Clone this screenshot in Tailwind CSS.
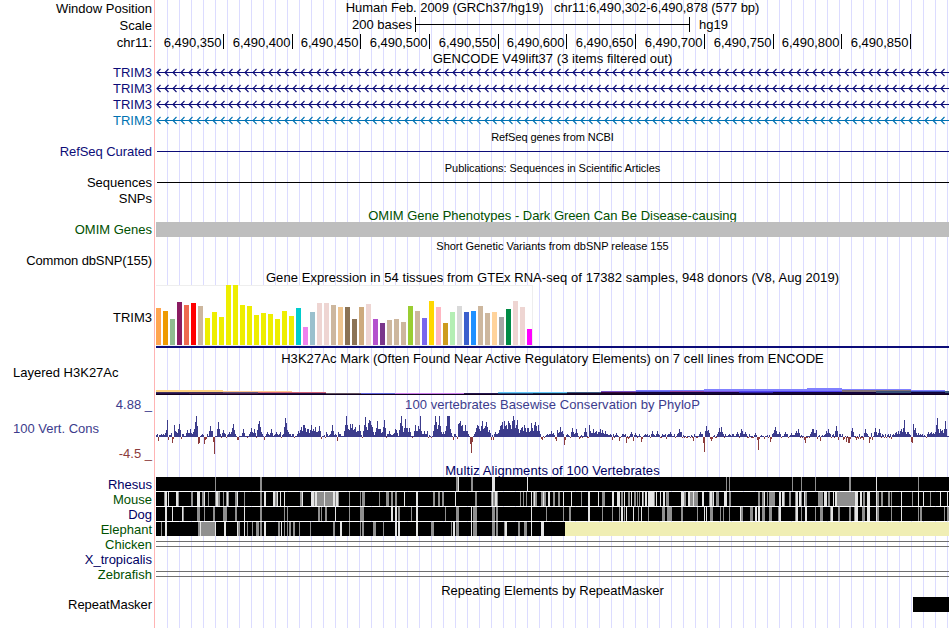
<!DOCTYPE html>
<html lang="en">
<head>
    <meta charset="UTF-8">
    <meta name="viewport" content="width=device-width, initial-scale=1.0">
    <script src="https://cdn.jsdelivr.net/npm/@tailwindcss/browser@4"></script>
    <title>Human chr11:6,490,302-6,490,878</title>
</head>
<body class="bg-white overflow-hidden">
  <div class="flex w-[949px] h-[628px] overflow-hidden font-['Liberation_Sans',Arial,sans-serif] text-[13px] text-black whitespace-nowrap">

    <!-- track labels -->
    <div class="flex flex-col shrink-0 w-[155px] pr-[2px] border-r border-[#ffb4b4] text-right">
      <div class="h-[17px] leading-[17px]">Window Position</div>
      <div class="h-[17px] leading-[17px]">Scale</div>
      <div class="h-[31px] leading-[17px]">chr11:</div>
      <div class="h-4 leading-[15px] text-[#0c0c78]">TRIM3</div>
      <div class="h-4 leading-[15px] text-[#0c0c78]">TRIM3</div>
      <div class="h-4 leading-[15px] text-[#0c0c78]">TRIM3</div>
      <div class="h-[31px] leading-[15px] text-[#0072b2]">TRIM3</div>
      <div class="h-[31px] leading-[15px] tracking-[-0.07px] text-[#0c0c78]">RefSeq Curated</div>
      <div class="h-4 leading-[15px]">Sequences</div>
      <div class="h-[31px] leading-[15px]">SNPs</div>
      <div class="h-[31px] leading-[15px] text-[#005000]">OMIM Genes</div>
      <div class="h-[32px] leading-[15px] tracking-[-0.12px]">Common dbSNP(155)</div>
      <div class="h-[80px] leading-[66px]">TRIM3</div>
      <div class="h-[32px] leading-[15px] text-left pl-[13px]">Layered H3K27Ac</div>
      <div class="h-[24px] leading-[15px] text-[#3c3c8c]">4.88 _</div>
      <div class="h-[25px] leading-[15px] text-left pl-[13px] text-[#3c3c8c]">100 Vert. Cons</div>
      <div class="h-[31px] leading-[15px] text-[#8c3c3c]">-4.5 _</div>
      <div class="h-[15px] leading-[15px] text-[#000064]">Rhesus</div>
      <div class="h-[15px] leading-[15px] text-[#005000]">Mouse</div>
      <div class="h-[15px] leading-[15px] text-[#000064]">Dog</div>
      <div class="h-[15px] leading-[15px] text-[#005000]">Elephant</div>
      <div class="h-[15px] leading-[15px] text-[#005000]">Chicken</div>
      <div class="h-[15px] leading-[15px] text-[#000064]">X_tropicalis</div>
      <div class="h-[30px] leading-[15px] text-[#005000]">Zebrafish</div>
      <div class="h-[15px] leading-[15px] tracking-[-0.05px]">RepeatMasker</div>
    </div>

    <!-- tracks -->
    <div class="flex flex-col shrink-0 ml-px w-[793px] text-center bg-[repeating-linear-gradient(90deg,transparent_0px,transparent_11px,#dcdcff_11px,#dcdcff_12px)]">
      <div class="h-[17px] leading-[15px] tracking-[-0.06px]">Human Feb. 2009 (GRCh37/hg19)&nbsp;&nbsp; chr11:6,490,302-6,490,878 (577 bp)</div>
      <div class="h-[17px] flex">
        <div class="w-[256px] text-right leading-[15px]">200 bases</div>
        <div class="ml-[3px] w-[275px] h-[15px] border-x border-black pt-[7px]"><div class="h-px bg-black"></div></div>
        <div class="ml-[9px] leading-[15px]">hg19</div>
      </div>
      <div id="ruler" class="h-[17px] flex leading-[17px] text-right"></div>
      <div class="h-[14px] leading-[15px] tracking-[0.03px]">GENCODE V49lift37 (3 items filtered out)</div>
      <svg id="genes" class="block h-[64px] w-[793px] fill-none" viewBox="0 0 793 64"></svg>
      <div class="h-[22px] leading-[16px] text-[11px] tracking-[-0.07px]">RefSeq genes from NCBI</div>
      <div class="h-px ml-px bg-[#0c0c78]"></div>
      <div class="h-[30px] pt-[8px] leading-[16px] text-[11px] tracking-[-0.05px]">Publications: Sequences in Scientific Articles</div>
      <div class="h-px ml-px bg-black"></div>
      <div class="h-[39px] pt-[25px] leading-[15px] text-[#005000]">OMIM Gene Phenotypes - Dark Green Can Be Disease-causing</div>
      <div class="h-[15px] bg-[#bebebe]"></div>
      <div class="h-[32px] pt-px leading-[16px] text-[11px] tracking-[-0.02px]">Short Genetic Variants from dbSNP release 155</div>
      <div class="h-[16px] leading-[17px] tracking-[0.065px]">Gene Expression in 54 tissues from GTEx RNA-seq of 17382 samples, 948 donors (V8, Aug 2019)</div>
      <div class="h-[61px] w-[377px] bg-white border-t border-r border-b border-[#eeeeee]">
        <svg id="gtex" class="block -mt-px w-[376px] h-[60px]" viewBox="0 0 376 60" shape-rendering="crispEdges"></svg>
      </div>
      <div class="h-[2px] bg-[#0c0c78]"></div>
      <div class="h-[17px] pt-px leading-[19px] tracking-[0.06px]">H3K27Ac Mark (Often Found Near Active Regulatory Elements) on 7 cell lines from ENCODE</div>
      <svg id="h3k" class="block w-[793px] h-[30px]" viewBox="0 365 793 30" shape-rendering="crispEdges"></svg>
      <div class="h-[17px] pt-[2px] leading-[15px] tracking-[0.06px] text-[#3c3c8c]">100 vertebrates Basewise Conservation by PhyloP</div>
      <svg id="phylop" class="block w-[793px] h-[50px]" viewBox="0 412 793 50" shape-rendering="crispEdges"></svg>
      <div class="h-[15px] leading-[17px] tracking-[0.1px] text-[#000064]">Multiz Alignments of 100 Vertebrates</div>
      <svg id="multiz" class="block w-[793px] h-[60px]" viewBox="156 0 793 60" shape-rendering="crispEdges"></svg>
      <div class="mt-[4px] h-[6px] border-y border-[#707070]"></div>
      <div class="mt-[24px] h-[6px] border-y border-[#707070]"></div>
      <div class="h-[20px] pt-[6px] leading-[15px]">Repeating Elements by RepeatMasker</div>
      <div class="self-end w-[36px] h-[15px] bg-black"></div>
    </div>
  </div>

  <script>
    var NS = 'http://www.w3.org/2000/svg';
    function rect(svg, x, y, w, h, color) {
      var r = document.createElementNS(NS, 'rect');
      r.setAttribute('x', x);
      r.setAttribute('y', y);
      r.setAttribute('width', w);
      r.setAttribute('height', h);
      r.setAttribute('fill', color);
      svg.appendChild(r);
    }
    function get(id) { return document.getElementById(id); }

    // ruler: position of each 50 base tick
    var prev = 156;
    [223, 292, 360, 429, 498, 566, 635, 704, 773, 841, 910].forEach(function (x, i) {
      var d = document.createElement('div');
      d.className = 'h-[15px] shrink-0 border-r border-black pr-[1.5px]';
      d.style.width = (x + 1 - prev) + 'px';
      d.textContent = '6,490,' + (350 + i * 50);
      get('ruler').appendChild(d);
      prev = x + 1;
    });

    // gene introns with strand arrows
    ['#0c0c78', '#0c0c78', '#0c0c78', '#0072b2'].forEach(function (color, i) {
      var y = i * 16 + 7.5;
      rect(get('genes'), 1, y - 0.5, 792, 1, color);
      var d = '';
      for (var x = 1; x < 790; x += 8) {
        d += 'M' + (x + 3.5) + ' ' + (y - 3.5) + 'L' + x + ' ' + y + 'L' + (x + 3.5) + ' ' + (y + 3.5);
      }
      var p = document.createElementNS(NS, 'path');
      p.setAttribute('d', d);
      p.setAttribute('stroke', color);
      p.setAttribute('stroke-width', '1.1');
      get('genes').appendChild(p);
    });

    // GTEx tissues: height, color
    var tissues = [
      [37, '#ffa54f'], [34, '#ee9a00'], [26, '#8fbc8f'], [43, '#8b1c62'], [40, '#ee6a50'], [42, '#ff0000'], [39, '#cdb79e'],
      [27, '#eeee00'], [33, '#eeee00'], [28, '#eeee00'], [60, '#eeee00'], [60, '#eeee00'], [40, '#eeee00'], [39, '#eeee00'],
      [30, '#eeee00'], [32, '#eeee00'], [31, '#eeee00'], [26, '#eeee00'], [34, '#eeee00'], [29, '#eeee00'], [37, '#00cdcd'],
      [18, '#ee82ee'], [33, '#9ac0cd'], [42, '#eed5d2'], [42, '#eed5d2'], [40, '#cdb79e'], [38, '#eec591'], [38, '#8b7355'],
      [26, '#8b7355'], [38, '#cdaa7d'], [41, '#eed5d2'], [26, '#b452cd'], [22, '#7a378b'], [25, '#cdb79e'], [26, '#cdb79e'],
      [23, '#cdb79e'], [39, '#9acd32'], [34, '#cdb79e'], [27, '#7a67ee'], [44, '#ffd700'], [38, '#ffb6c1'], [22, '#cd9b1d'],
      [33, '#b4eeb4'], [39, '#d9d9d9'], [33, '#3a5fcd'], [34, '#1e90ff'], [39, '#cdb79e'], [32, '#cdb79e'], [33, '#ffd39b'],
      [28, '#a6a6a6'], [36, '#008b45'], [44, '#eed5d2'], [38, '#eed5d2'], [16, '#ff00ff']
    ];
    tissues.forEach(function (t, i) {
      rect(get('gtex'), i * 7, 60 - t[0], 5, t[0], t[1]);
    });

    // H3K27Ac: x1, x2, y, height, color
    [
      [156, 949, 394, 1, '#10001c'], [156, 326, 393, 1, '#28104c'], [189, 258, 393, 1, '#50204c'],
      [156, 223, 390, 2, '#ffd280'], [223, 292, 391, 1, '#ffc890'], [156, 223, 392, 1, '#40305c'], [223, 258, 392, 1, '#5c5080'],
      [258, 326, 392, 1, '#d06478'], [326, 361, 393, 1, '#605060'], [361, 395, 393, 1, '#6464dc'], [395, 464, 393, 1, '#c878e8'],
      [464, 498, 393, 1, '#281850'], [498, 567, 392, 1, '#64c8fa'], [498, 533, 393, 1, '#28507c'], [533, 567, 393, 1, '#183048'],
      [567, 601, 392, 1, '#3c5a80'], [567, 636, 393, 1, '#180428'], [601, 636, 391, 1, '#7850c8'], [601, 636, 392, 1, '#400c3c'],
      [636, 949, 392, 2, '#14043c'], [636, 704, 390, 1, '#7878ff'], [636, 670, 391, 1, '#5858d8'], [670, 704, 391, 1, '#9040a0'],
      [704, 807, 389, 2, '#8080ff'], [704, 739, 391, 1, '#7850dc'], [739, 842, 391, 1, '#5040f0'], [739, 773, 392, 1, '#2c20a0'],
      [807, 842, 388, 3, '#8080ff'], [842, 911, 389, 1, '#8080ff'], [842, 911, 390, 2, '#807078'], [876, 911, 391, 2, '#385078'],
      [911, 945, 390, 1, '#8080ff'], [911, 945, 391, 1, '#384cb0'], [945, 949, 391, 2, '#385878']
    ].forEach(function (s) {
      rect(get('h3k'), s[0] - 156, s[2], s[1] - s[0], s[3], s[4]);
    });

    // PhyloP peaks and dips, each list in thirds of a pixel from its own origin
    var peaks = [
      [150, '21:3 34:3 40:3 50:7 52:17 64:4 74:12 80:5 84:8 88:13 112:7 122:8 130:5 136:15 139:21 158:3 181:11 186:6 206:15 220:7 238:5 248:9 250:13 279:8 300:5 304:9 314:8 324:13 328:16 332:10 352:5 365:8 380:5 392:5 406:19 410:14 416:5 445:6 450:7 455:10 459:12 463:12 467:9 472:8 476:8 480:7 485:12 489:8 493:6 497:10 503:5 508:11 530:5 547:12 565:5 585:12 588:21 592:12 596:8 600:13 604:9 607:13 612:8 617:10 621:6 627:12 642:12 645:20 650:10 654:14 657:17 662:16 665:12 668:10 680:9 683:16 687:8 690:8 700:10 703:17 717:6 735:8 740:7 750:14 754:21 763:9 767:18 771:9 778:9 795:12 806:11'],
      [415, '0:12 13:8 16:21 20:6 28:6 38:6 57:12 60:21 64:15 70:12 74:21 78:5 86:5 91:6 94:11 97:21 100:21 103:21 106:8 131:13 134:14 137:16 140:11 143:12 152:12 158:6 183:9 186:12 190:11 194:8 199:11 203:16 207:9 211:11 215:15 218:10 222:7 240:5 253:7 257:11 260:12 263:15 267:16 271:11 275:12 279:16 283:14 287:12 291:16 295:21 299:17 303:12 307:17 311:8 315:7 319:9 323:10 327:12 331:9 336:9 340:9 345:6 349:14 353:9 357:12 361:15 365:11 369:12 372:6 397:3 402:3 410:6 416:4 427:7 432:5 437:10 443:6 457:3 472:9 476:5 485:8 510:9 522:12 530:4 535:8 540:5 545:6 549:5 553:5 557:8 561:7 565:4 570:6 605:4 630:3 650:5 662:4 690:3 712:6 727:6 765:5 792:8 796:5 800:5'],
      [680, '60:5 80:11 84:7 119:9 123:10 127:5 147:3 172:5 183:8 187:6 195:5 225:4 282:7 286:10 290:6 297:5 316:5 333:4 345:4 350:6 355:8 393:5 397:8 401:8 408:7 435:3 440:6 445:8 470:11 513:6 516:9 557:8 575:4 585:9 598:8 640:3 645:4 650:5 655:6 661:6 665:8 669:9 673:17 677:5 681:5 685:5 689:3 701:13 705:9 710:4 715:4 720:3 745:5 750:4 755:5 760:4 765:5 768:12 772:19 776:8 780:8 784:6 787:7 793:8 796:16']
    ];
    var dips = [
      [150, '26:4 55:3 67:6 71:2 94:2 145:7 149:6 164:7 167:3 170:2 190:5 193:17 228:1 262:3 266:3 344:3 395:1 434:1 515:2 525:1 562:4 637:1'],
      [415, '40:1 49:1 115:3 126:2 165:7 169:16 172:5 230:3 234:3 379:2 382:3 388:1 420:2 424:4 448:8 451:3 465:1 494:2 520:1 592:3 614:4 617:1 634:6 640:2 655:4 679:5 683:2 705:1 735:1 755:2 780:1'],
      [680, '8:1 18:1 30:1 40:4 70:6 73:15 91:2 94:4 97:2 105:1 205:1 220:1 232:3 235:13 238:2 252:2 265:1 272:5 275:2 305:1 325:1 373:3 376:6 412:2 421:4 455:1 475:3 490:3 494:2 500:5 504:6 508:6 512:2 530:3 535:2 541:2 550:3 568:6 572:2 577:3 612:1 620:1 635:2 694:5 697:6 738:1']
    ];
    function spread(groups) {
      var out = {};
      groups.forEach(function (g) {
        g[1].split(' ').forEach(function (s) {
          var v = s.split(':');
          var x = Math.floor(g[0] + v[0] / 3) - 156;
          out[x] = Math.max(out[x] || 0, +v[1]);
        });
      });
      return out;
    }
    var up = spread(peaks), down = spread(dips);
    for (var x = 0; x < 793; x++) {
      if (down[x]) {
        rect(get('phylop'), x, 437, 1, down[x], '#8c3c3c');
        continue;
      }
      var near = Math.max(up[x - 1] || 0, up[x + 1] || 0);
      var low = (x * 7 + (x * x) % 11) % 5;
      var h = up[x] || (near ? Math.max(2, Math.round(near * 0.5)) : [2, 0, 3, 1, 1][low]);
      if (h) rect(get('phylop'), x, 437 - h, 1, h, '#3c3c8c');
      else rect(get('phylop'), x, 437, 1, 1, '#8c3c3c');
      rect(get('phylop'), x, 436, 1, 1, '#3c3c8c');
    }

    // alignment gaps: position, shade (g gray, w light), width
    [
      '215g1 260g2 456g2 458w1 471g2 492w3 527w1 726g1 729g1 792g1 801g1 815g1 849g2 876w1 918g1',
      '164g1 165w2 168w1 176w2 178g1 191g2 197w3 202g2 204w1 208g1 215g1 216w2 218g2 223g1 226g1 227w1 228g1 235g2 237w1 244g1 260g2 264w2 273w2 275g2 277w1 280w1 284w1 300g2 302w1 311w3 314g1 315w2 317g16 324w1 333w2 335g1 336w2 338g1 349g1 360g1 362g3 379g1 386g3 391g2 395g2 404w1 416w2 433g2 438g2 442g2 455w1 475g2 491g1 492w1 493g2 495w2 497g1 520g1 523g1 526g1 531w1 533g1 534w1 535g2 541g2 543w1 544g2 548w2 553g2 558g2 563w1 571w1 581g1 588w2 598w1 602g3 612w2 617w3 621g2 624w1 628g2 631w1 634g2 637g1 639g1 642w1 643g1 645w2 648w6 654g1 656w1 660w1 663w2 666g3 681w3 684g2 688w2 690g3 693w1 694g4 702w2 709g1 710w2 712g1 713w1 716g3 724w3 729g2 758g2 762g2 764w1 767g1 769g6 779w2 782w2 784g1 789g2 795g1 796w2 799w2 801g1 804w1 805g2 818g5 824w3 828g2 833w1 835w2 837g18 855w3 860w2 863g2 867w3 876w1 877g2 881g2 888g2 891g1 901w1 912g1 918w1 923w1 930g1 940w1 947w1',
      '165w2 172w1 182w1 183g1 197g3 204g1 213g2 223g1 224g3 235g2 244w1 260g2 284g1 287g1 318g2 321g1 325g2 335w1 349g1 360g4 391w2 395w2 398g2 411g1 416w2 445g1 456g3 471w1 473g4 492g3 496g2 531w1 546g1 563g1 569g2 588w2 602g1 612g1 619g1 621w2 624g1 626w1 633w1 638g1 641w1 648g1 662g3 667g5 681g2 697g1 704w1 706w1 710g3 720g1 723g1 729g1 740w1 741g2 750g3 755w2 758w2 762g2 764g1 769g3 778g1 779w2 795g1 796w2 801g1 805w2 815g1 820g3 830g1 831w2 838g2 849g2 854g1 855w3 862g3 867w3 876w1 877g2 891g1 901w1 918g1 920g2 944g1 947g2',
      '161g1 165w2 198g2 200w1 201g14 215w1 224w2 237w1 238g2 244w1 247g1 252g1 256g3 260g2 264w2 278g2 281w1 284g1 287g1 289g2 293g2 299g1 310g1 333g2 340w2 349g1 360g1 362g2 373g3 383g1 395w2 398w2 416w2 431g3 451g1 453w2 456g3 471w1 473g4 492g3 496g2 504g1 505w2 518g2 524g2 526g1 531w1 541w3'
    ].forEach(function (row, i) {
      var y = i * 15;
      rect(get('multiz'), 156, y, 793, 14, '#000000');
      row.split(' ').forEach(function (s) {
        var m = s.match(/(\d+)([gw])(\d+)/);
        rect(get('multiz'), +m[1], y, +m[3], 14, m[2] == 'g' ? '#8f8f8f' : '#e4e4e4');
      });
    });
    rect(get('multiz'), 565, 45, 384, 14, '#f0eeb4');
  </script>
</body>
</html>
